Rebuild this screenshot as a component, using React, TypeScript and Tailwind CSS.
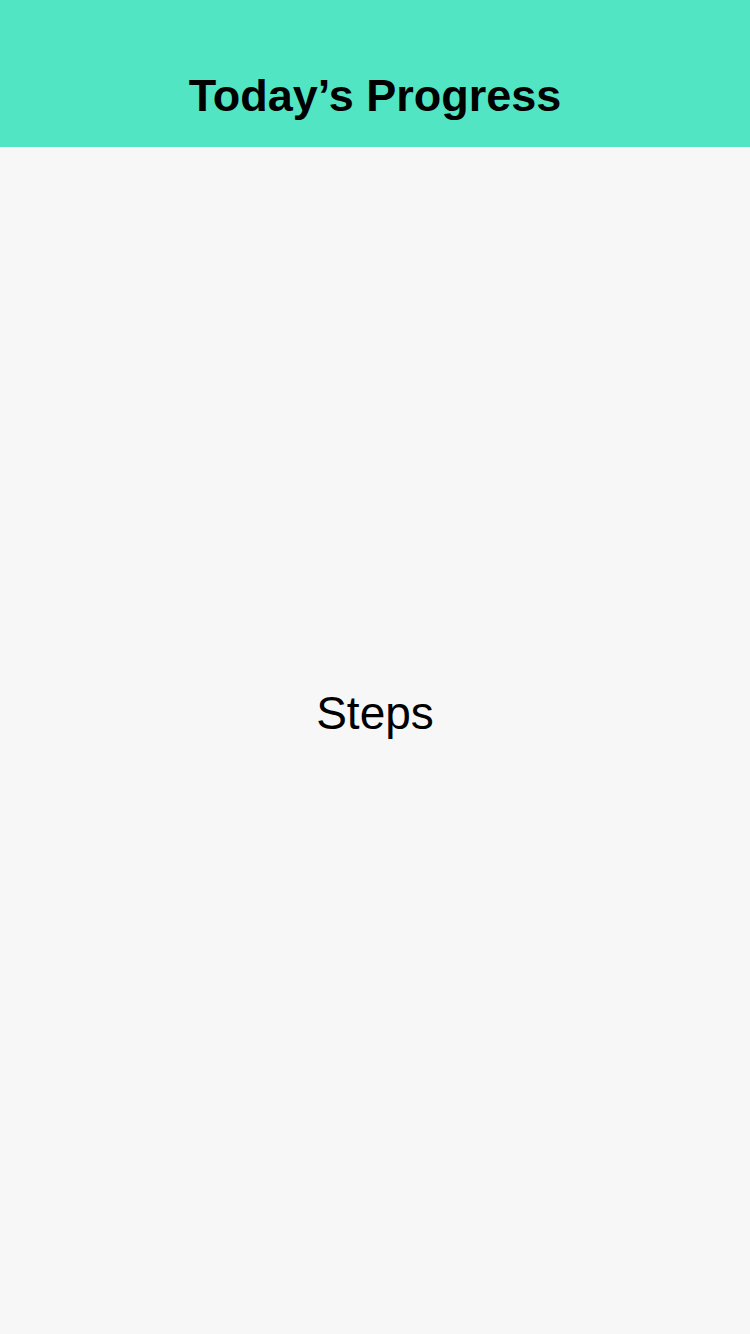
export default function App() {
  return (
    <div className="w-[750px] h-[1334px] bg-[#f7f7f7] flex flex-col" style={{ fontFamily: '"Liberation Sans", Arial, sans-serif' }}>
      <div className="h-[147px] bg-[#52e5c3] flex items-end justify-center pb-[25px]">
        <h1 className="text-[45px] leading-[52px] font-bold text-black">Today’s Progress</h1>
      </div>
      <div className="flex-1 flex items-start justify-center pt-[540px]">
        <span className="text-[46px] leading-[52px] text-black">Steps</span>
      </div>
    </div>
  );
}
